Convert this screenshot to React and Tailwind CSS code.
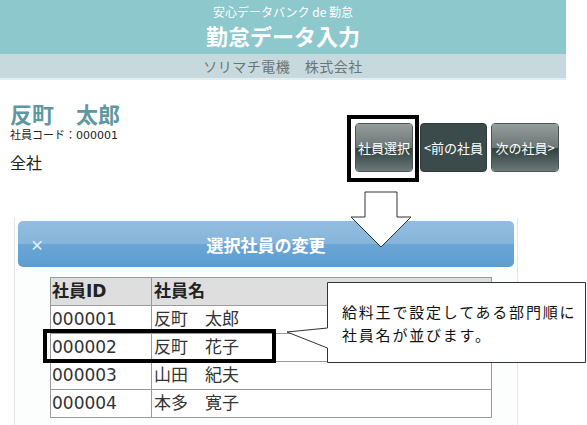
import React from "react";

const rows = [
  ["000001", "反町　太郎"],
  ["000002", "反町　花子"],
  ["000003", "山田　紀夫"],
  ["000004", "本多　寛子"],
];

function Gloss({ w, children }) {
  return (
    <div className={`${w} h-[49px] rounded-[4px] border border-[#4a5555] overflow-hidden flex flex-col relative`}>
      <div className="h-1/2 bg-gradient-to-b from-[#959c9c] to-[#6c7675]" />
      <div className="h-1/2 bg-gradient-to-b from-[#2f3f3d] to-[#6b7a78]" />
      <div className="absolute inset-0 flex items-center justify-center text-[13px] text-white leading-none">
        {children}
      </div>
    </div>
  );
}

export default function App() {
  return (
    <div className="relative w-[587px] h-[425px] overflow-hidden bg-white font-['Noto_Sans_CJK_JP',sans-serif] text-[#222]">
      {/* header */}
      <div className="w-[566px]">
        <div className="h-[54px] bg-[#8cc8cc] flex flex-col items-center pt-[5px]">
          <div className="text-[12px] leading-[14px] text-white">安心データバンク de 勤怠</div>
          <div className="mt-[3px] text-[22px] leading-[26px] font-bold text-white">勤怠データ入力</div>
        </div>
        <div className="h-[24px] bg-[#c7d9dc] flex items-center justify-center text-[14px] leading-none text-[#6b7478] tracking-[0.5px]">
          ソリマチ電機　株式会社
        </div>
        <div className="h-[2px] bg-[#e4eef0]" />
      </div>

      {/* employee info + buttons */}
      <div className="h-[138px] flex justify-between">
        <div className="pl-[10px] pt-[19px]">
          <div className="text-[22px] leading-[28px] font-bold text-[#5f98a0]">反町　太郎</div>
          <div className="mt-[3px] text-[11px] leading-[12px] text-[#222] font-['DejaVu_Sans','Noto_Sans_CJK_JP',sans-serif]">
            社員コード：000001
          </div>
          <div className="text-[16px] leading-[20px] text-[#222] mt-[10px]">全社</div>
        </div>
        <div className="flex pt-[43px] pr-[28px] items-start">
          <Gloss w="w-[58px]">社員選択</Gloss>
          <div className="ml-[7px] h-[49px] w-[67px] rounded-[4px] bg-[#3b4b4b] border border-[#2e3a3a] flex items-center justify-center text-[13px] text-white leading-none">
            &lt;前の社員
          </div>
          <div className="ml-[4px]">
            <Gloss w="w-[68px]">次の社員&gt;</Gloss>
          </div>
        </div>
      </div>

      {/* dialog panel */}
      <div className="ml-[14px] w-[504px] h-[220px] border-l border-r border-[#e2e6e8] bg-[#fcfdfd] pt-[3px] px-[3px]">
        <div className="h-[46px] rounded-[5px] overflow-hidden relative flex flex-col">
          <div className="h-1/2 bg-gradient-to-b from-[#92bde0] to-[#86b5da]" />
          <div className="h-1/2 bg-gradient-to-b from-[#6aa6d6] to-[#5c9dd0]" />
          <div className="absolute inset-0 flex items-center px-[12px]">
            <span className="text-[14px] font-bold text-[#e8f1f8] leading-none">×</span>
          </div>
          <div className="absolute inset-0 flex items-center justify-center">
            <span className="text-[17px] font-bold text-white leading-none">選択社員の変更</span>
          </div>
        </div>
        <div className="pl-[32px] pt-[10px]">
          <table className="border-collapse text-[17px] leading-none font-['DejaVu_Sans','Noto_Sans_CJK_JP',sans-serif]">
            <thead>
              <tr className="bg-[#dedede]">
                <th className="w-[101px] h-[28px] border border-[#9a9a9a] text-left font-bold px-[1px] text-[#222]">社員ID</th>
                <th className="w-[340px] h-[28px] border border-[#9a9a9a] text-left font-bold px-[2px] text-[#222]">社員名</th>
              </tr>
            </thead>
            <tbody>
              {rows.map(([id, name]) => (
                <tr key={id} className="bg-white">
                  <td className="h-[28px] border border-[#9a9a9a] px-[1px] text-[#333]">{id}</td>
                  <td className="h-[28px] border border-[#9a9a9a] px-[2px] text-[#333]">{name}</td>
                </tr>
              ))}
            </tbody>
          </table>
        </div>
      </div>

      {/* annotation: box around button */}
      <div className="absolute left-[347px] top-[115px] w-[72px] h-[67px] border-[4px] border-black" />

      {/* annotation: down arrow and callout balloon */}
      <svg className="absolute left-0 top-0" width="587" height="425" viewBox="0 0 587 425">
        <polygon
          points="365,192 397,192 397,217 411,217 381,247 351,217 365,217"
          fill="#ffffff"
          stroke="#333333"
          strokeWidth="1"
        />
        <path
          d="M327.5,282.5 H585.5 V362.5 H327.5 V348 L287,332 L327.5,328 Z"
          fill="#ffffff"
          stroke="#333333"
          strokeWidth="1"
        />
      </svg>

      {/* annotation: box around row */}
      <div className="absolute left-[43px] top-[329px] w-[233px] h-[34px] border-[4px] border-black" />

      {/* callout text */}
      <div className="absolute left-[342px] top-[300px] text-[15px] leading-[23px] tracking-[1.8px] text-[#111]">
        <div>給料王で設定してある部門順に</div>
        <div>社員名が並びます。</div>
      </div>
    </div>
  );
}
